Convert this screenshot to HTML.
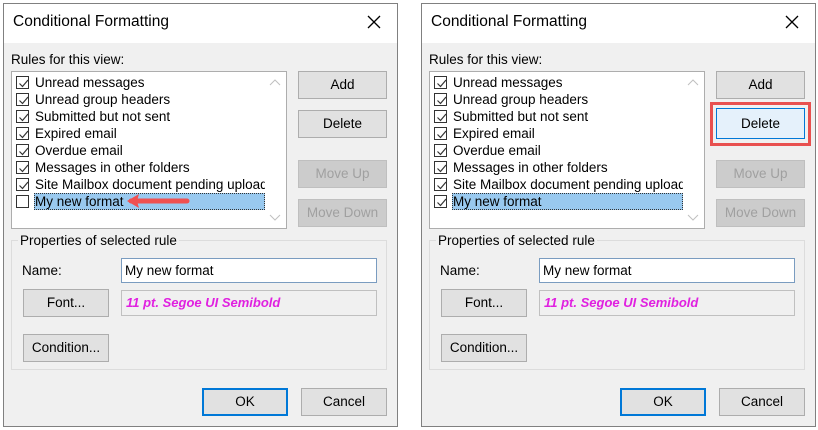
<!DOCTYPE html>
<html><head><meta charset="utf-8"><style>
*{box-sizing:border-box;margin:0;padding:0}
body{width:818px;height:430px;background:#fff;position:relative;overflow:hidden;font-family:"Liberation Sans",sans-serif;font-size:13.5px;color:#000}
.dlg{position:absolute;top:3px;width:395px;height:424px;background:#f0f0f0;box-shadow:inset 0 0 0 1px #808080}
.dlg *{position:absolute}
.tb{left:1px;top:1px;width:393px;height:39px;background:#fff}
.tt{left:10px;top:10px;font-size:15.5px;white-space:nowrap}
.x{left:363px;top:11px}
.lbl{white-space:nowrap}
.lb{left:8px;top:68px;width:276px;height:158px;background:#fff;border:1px solid #adadad}
.row{left:2px;height:17px;width:252px}
.cb{left:2px;top:2px;width:13px;height:13px;border:1px solid #333;background:#fff}
.cb svg{left:1px;top:1px}
.rt{left:21px;top:0px;white-space:nowrap;line-height:17px;font-size:13.5px;width:230px;overflow:hidden}
.sel{left:20px;top:0;width:231px;height:17px;background:#99c9ef;border:1px dotted #333}
.btn{background:#e1e1e1;border:1px solid #adadad;text-align:center;font-size:13.5px}
.dis{color:#a0a0a0;background:#cccccc;border-color:#bfbfbf}
.grp{left:8px;top:237px;width:376px;height:130px;border:1px solid #dcdcdc}
.inp{background:#fff;border:1px solid #7a9cc0}
.fbox{border:1px solid #c0c0c0;background:#f0f0f0;color:#e020e0;font-style:italic;font-weight:bold;font-size:13px;padding:4px 0 0 4px;white-space:nowrap}
</style></head><body>

<!-- LEFT -->
<div class="dlg" style="left:3px">
<div class="tb"></div>
<div class="tt">Conditional Formatting</div>
<svg class="x" width="16" height="16" viewBox="0 0 16 16"><path d="M2 2L14 14M14 2L2 14" stroke="#000" stroke-width="1.3"/></svg>
<div class="lbl" style="left:8px;top:49px">Rules for this view:</div>
<div class="lb">
 <div class="row" style="top:2px"><div class="cb"><svg width="11" height="11"><path d="M1.5 5.5L4.5 8.5L10 2" stroke="#333" fill="none" stroke-width="1.2"/></svg></div><div class="rt">Unread messages</div></div>
 <div class="row" style="top:19px"><div class="cb"><svg width="11" height="11"><path d="M1.5 5.5L4.5 8.5L10 2" stroke="#333" fill="none" stroke-width="1.2"/></svg></div><div class="rt">Unread group headers</div></div>
 <div class="row" style="top:36px"><div class="cb"><svg width="11" height="11"><path d="M1.5 5.5L4.5 8.5L10 2" stroke="#333" fill="none" stroke-width="1.2"/></svg></div><div class="rt">Submitted but not sent</div></div>
 <div class="row" style="top:53px"><div class="cb"><svg width="11" height="11"><path d="M1.5 5.5L4.5 8.5L10 2" stroke="#333" fill="none" stroke-width="1.2"/></svg></div><div class="rt">Expired email</div></div>
 <div class="row" style="top:70px"><div class="cb"><svg width="11" height="11"><path d="M1.5 5.5L4.5 8.5L10 2" stroke="#333" fill="none" stroke-width="1.2"/></svg></div><div class="rt">Overdue email</div></div>
 <div class="row" style="top:87px"><div class="cb"><svg width="11" height="11"><path d="M1.5 5.5L4.5 8.5L10 2" stroke="#333" fill="none" stroke-width="1.2"/></svg></div><div class="rt">Messages in other folders</div></div>
 <div class="row" style="top:104px"><div class="cb"><svg width="11" height="11"><path d="M1.5 5.5L4.5 8.5L10 2" stroke="#333" fill="none" stroke-width="1.2"/></svg></div><div class="rt">Site Mailbox document pending upload</div></div>
 <div class="row" style="top:121px"><div class="sel"></div><div class="cb"></div><div class="rt">My new format</div></div>
 <svg style="left:257px;top:6px" width="12" height="8"><path d="M1 7L6 2L11 7" stroke="#c0c0c0" fill="none"/></svg>
 <svg style="left:257px;top:142px" width="12" height="8"><path d="M1 1L6 6L11 1" stroke="#c0c0c0" fill="none"/></svg>
</div>
<svg style="left:120px;top:189px" width="70" height="18"><path d="M8 9H64" stroke="#f05050" stroke-width="5" stroke-linecap="round"/><path d="M4 9L16 2L14 9L16 16Z" fill="#f05050"/></svg>
<div class="btn" style="left:295px;top:68px;width:89px;height:28px;line-height:26px">Add</div>
<div class="btn" style="left:295px;top:107px;width:89px;height:28px;line-height:26px">Delete</div>
<div class="btn dis" style="left:295px;top:157px;width:89px;height:28px;line-height:26px">Move Up</div>
<div class="btn dis" style="left:295px;top:196px;width:89px;height:28px;line-height:26px">Move Down</div>
<div class="grp"></div>
<div class="lbl" style="left:15px;top:230px;background:#f0f0f0;padding:0 2px">Properties of selected rule</div>
<div class="lbl" style="left:19px;top:260px">Name:</div>
<div class="inp" style="left:118px;top:255px;width:256px;height:25px;padding:4px 0 0 3px;white-space:nowrap">My new format</div>
<div class="btn" style="left:20px;top:286px;width:86px;height:28px;line-height:26px">Font...</div>
<div class="fbox" style="left:118px;top:287px;width:256px;height:26px">11 pt. Segoe UI Semibold</div>
<div class="btn" style="left:20px;top:331px;width:86px;height:28px;line-height:26px">Condition...</div>
<div class="btn" style="left:199px;top:385px;width:86px;height:28px;line-height:24px;border:2px solid #0078d7">OK</div>
<div class="btn" style="left:298px;top:385px;width:86px;height:28px;line-height:26px">Cancel</div>
</div>

<!-- RIGHT -->
<div class="dlg" style="left:421px">
<div class="tb"></div>
<div class="tt">Conditional Formatting</div>
<svg class="x" width="16" height="16" viewBox="0 0 16 16"><path d="M2 2L14 14M14 2L2 14" stroke="#000" stroke-width="1.3"/></svg>
<div class="lbl" style="left:8px;top:49px">Rules for this view:</div>
<div class="lb">
 <div class="row" style="top:2px"><div class="cb"><svg width="11" height="11"><path d="M1.5 5.5L4.5 8.5L10 2" stroke="#333" fill="none" stroke-width="1.2"/></svg></div><div class="rt">Unread messages</div></div>
 <div class="row" style="top:19px"><div class="cb"><svg width="11" height="11"><path d="M1.5 5.5L4.5 8.5L10 2" stroke="#333" fill="none" stroke-width="1.2"/></svg></div><div class="rt">Unread group headers</div></div>
 <div class="row" style="top:36px"><div class="cb"><svg width="11" height="11"><path d="M1.5 5.5L4.5 8.5L10 2" stroke="#333" fill="none" stroke-width="1.2"/></svg></div><div class="rt">Submitted but not sent</div></div>
 <div class="row" style="top:53px"><div class="cb"><svg width="11" height="11"><path d="M1.5 5.5L4.5 8.5L10 2" stroke="#333" fill="none" stroke-width="1.2"/></svg></div><div class="rt">Expired email</div></div>
 <div class="row" style="top:70px"><div class="cb"><svg width="11" height="11"><path d="M1.5 5.5L4.5 8.5L10 2" stroke="#333" fill="none" stroke-width="1.2"/></svg></div><div class="rt">Overdue email</div></div>
 <div class="row" style="top:87px"><div class="cb"><svg width="11" height="11"><path d="M1.5 5.5L4.5 8.5L10 2" stroke="#333" fill="none" stroke-width="1.2"/></svg></div><div class="rt">Messages in other folders</div></div>
 <div class="row" style="top:104px"><div class="cb"><svg width="11" height="11"><path d="M1.5 5.5L4.5 8.5L10 2" stroke="#333" fill="none" stroke-width="1.2"/></svg></div><div class="rt">Site Mailbox document pending upload</div></div>
 <div class="row" style="top:121px"><div class="sel"></div><div class="cb"><svg width="11" height="11"><path d="M1.5 5.5L4.5 8.5L10 2" stroke="#333" fill="none" stroke-width="1.2"/></svg></div><div class="rt">My new format</div></div>
 <svg style="left:257px;top:6px" width="12" height="8"><path d="M1 7L6 2L11 7" stroke="#c0c0c0" fill="none"/></svg>
 <svg style="left:257px;top:142px" width="12" height="8"><path d="M1 1L6 6L11 1" stroke="#c0c0c0" fill="none"/></svg>
</div>
<div class="btn" style="left:295px;top:68px;width:89px;height:28px;line-height:26px">Add</div>
<div style="left:289px;top:99px;width:101px;height:44px;border:3px solid #e8504f"></div>
<div class="btn" style="left:295px;top:105px;width:89px;height:31px;line-height:29px;background:#e5f1fb;border-color:#0078d7">Delete</div>
<div class="btn dis" style="left:295px;top:157px;width:89px;height:28px;line-height:26px">Move Up</div>
<div class="btn dis" style="left:295px;top:196px;width:89px;height:28px;line-height:26px">Move Down</div>
<div class="grp"></div>
<div class="lbl" style="left:15px;top:230px;background:#f0f0f0;padding:0 2px">Properties of selected rule</div>
<div class="lbl" style="left:19px;top:260px">Name:</div>
<div class="inp" style="left:118px;top:255px;width:256px;height:25px;padding:4px 0 0 3px;white-space:nowrap">My new format</div>
<div class="btn" style="left:20px;top:286px;width:86px;height:28px;line-height:26px">Font...</div>
<div class="fbox" style="left:118px;top:287px;width:256px;height:26px">11 pt. Segoe UI Semibold</div>
<div class="btn" style="left:20px;top:331px;width:86px;height:28px;line-height:26px">Condition...</div>
<div class="btn" style="left:199px;top:385px;width:86px;height:28px;line-height:24px;border:2px solid #0078d7">OK</div>
<div class="btn" style="left:298px;top:385px;width:86px;height:28px;line-height:26px">Cancel</div>
</div>
</body></html>
